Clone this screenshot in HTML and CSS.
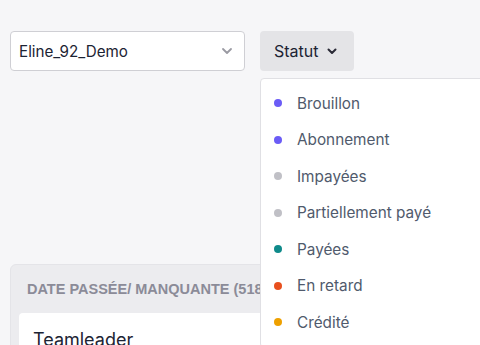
FILE: index.html
```html
<!DOCTYPE html>
<html lang="fr">
<head>
    <meta charset="UTF-8">
    <meta name="viewport" content="width=device-width, initial-scale=1.0">
    <title>Factures</title>
    <link rel="stylesheet" href="styles.css">
</head>
<body>
    <h1 class="page-title">Comptes clients</h1>

    <div class="filters">
        <div class="select-box">
            <span>Eline_92_Demo</span>
            <svg class="chevron" width="12" height="8" viewBox="0 0 12 8"><path d="M2 2l4 4 4-4" fill="none" stroke="#9a9aa2" stroke-width="1.8" stroke-linecap="round" stroke-linejoin="round"/></svg>
        </div>
        <div class="status-wrap">
            <button class="status-btn">
                Statut
                <svg width="10" height="7" viewBox="0 0 10 7"><path d="M1.5 1.5l3.5 3.5 3.5-3.5" fill="none" stroke="#2a2a36" stroke-width="2" stroke-linecap="round" stroke-linejoin="round"/></svg>
            </button>
            <ul class="status-menu">
                <li><span class="dot dot-draft"></span>Brouillon</li>
                <li><span class="dot dot-draft"></span>Abonnement</li>
                <li><span class="dot dot-grey"></span>Impayées</li>
                <li><span class="dot dot-grey"></span>Partiellement payé</li>
                <li><span class="dot dot-paid"></span>Payées</li>
                <li><span class="dot dot-late"></span>En retard</li>
                <li><span class="dot dot-credit"></span>Crédité</li>
            </ul>
        </div>
    </div>

    <div class="column">
        <div class="column-head">DATE PASSÉE/ MANQUANTE (518)</div>
        <div class="card">Teamleader</div>
    </div>
</body>
</html>
```

FILE: styles.css
```css
body {
    margin: 0;
    padding: 0 10px;
    background-color: #f6f6f8;
    font-family: Inter, "Noto Sans", sans-serif;
    height: 345px;
    overflow: hidden;
}
.page-title {
    height: 30px;
    margin: -29px 0 0 20px;
    font-size: 26px;
    line-height: 30px;
    font-weight: 700;
    color: #14213d;
}
.filters {
    display: flex;
    gap: 15px;
    margin-top: 30px;
}
.select-box {
    width: 235px;
    height: 40px;
    box-sizing: border-box;
    display: flex;
    align-items: center;
    justify-content: space-between;
    padding: 0 11px 0 8px;
    background-color: #fff;
    border: 1px solid #cfcfd4;
    border-radius: 4px;
    font-size: 15.2px;
    color: #1c2333;
}
.status-wrap {
    position: relative;
}
.status-btn {
    height: 40px;
    display: flex;
    align-items: center;
    gap: 8px;
    padding: 0 17px 0 14px;
    background-color: #e4e4e7;
    border: none;
    border-radius: 4px;
    font-family: inherit;
    font-size: 16px;
    color: #1c2333;
}
.status-menu {
    position: absolute;
    top: 47px;
    left: 0;
    z-index: 2;
    width: 240px;
    margin: 0;
    padding: 6px 0;
    list-style: none;
    background-color: #fff;
    border: 1px solid #e0e0e4;
    border-radius: 4px;
}
.status-menu li {
    display: flex;
    align-items: center;
    height: 36.5px;
    padding-left: 13px;
    font-size: 15.3px;
    color: #505a6c;
}
.dot {
    width: 8px;
    height: 8px;
    border-radius: 50%;
    margin-right: 15px;
}
.dot-draft { background-color: #6b5cf6; }
.dot-grey { background-color: #c0c0c6; }
.dot-paid { background-color: #0f8a8a; }
.dot-late { background-color: #e8501e; }
.dot-credit { background-color: #eea000; }
.column {
    margin-top: 193px;
    width: 300px;
    background-color: #ececef;
    border: 1px solid #e4e4e8;
    border-radius: 6px;
    padding: 0 8px;
}
.column-head {
    padding: 16px 8px 0;
    height: 32px;
    font-family: "Liberation Sans", Arial, sans-serif;
    font-size: 14.5px;
    font-weight: 700;
    color: #8b8b98;
    white-space: nowrap;
    overflow: hidden;
}
.card {
    background-color: #fff;
    border-radius: 4px;
    padding: 16px 14px;
    font-size: 18px;
    color: #1c2333;
}
```
